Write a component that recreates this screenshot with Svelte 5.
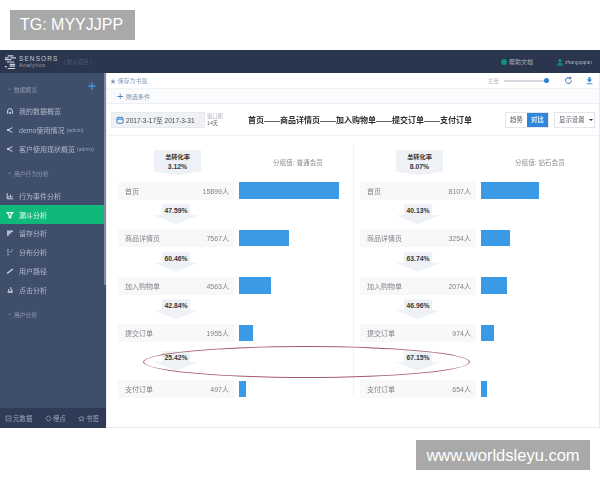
<script>
  const nav = [
    { type: "head", text: "数据概览", plus: true },
    { icon: "home", text: "我的数据概览" },
    { icon: "share", text: "demo使用情况", tag: "(admin)" },
    { icon: "share", text: "客户使用现状概览", tag: "(admin)" },
    { type: "head", text: "用户行为分析" },
    { icon: "chart", text: "行为事件分析" },
    { icon: "funnel", text: "漏斗分析", active: true },
    { icon: "retain", text: "留存分析" },
    { icon: "dist", text: "分布分析" },
    { icon: "path", text: "用户路径" },
    { icon: "click", text: "点击分析" },
    { type: "head", text: "用户分析" }
  ];

  const panels = [
    {
      total: "3.12%",
      group: "普通会员",
      steps: [
        { name: "首页", count: "15899人", bar: 100, next: "47.59%" },
        { name: "商品详情页", count: "7567人", bar: 50, next: "60.46%" },
        { name: "加入购物单", count: "4563人", bar: 32, next: "42.84%" },
        { name: "提交订单", count: "1955人", bar: 14, next: "25.42%" },
        { name: "支付订单", count: "497人", bar: 7 }
      ]
    },
    {
      total: "8.07%",
      group: "钻石会员",
      steps: [
        { name: "首页", count: "8107人", bar: 58, next: "40.13%" },
        { name: "商品详情页", count: "3254人", bar: 29, next: "63.74%" },
        { name: "加入购物单", count: "2074人", bar: 26, next: "46.96%" },
        { name: "提交订单", count: "974人", bar: 13, next: "67.15%" },
        { name: "支付订单", count: "654人", bar: 6 }
      ]
    }
  ];
</script>

{#snippet navIcon(name)}
  <svg class="nav-icon" viewBox="0 0 10 10" fill="none" stroke="currentColor" stroke-width="1.2">
    {#if name === "home"}
      <path d="M2 8.5V5a3 3 0 0 1 6 0v3.5M4.2 8.5V6.5h1.6v2" />
    {:else if name === "share"}
      <path d="M8 2 2.5 5 8 8" /><circle cx="2.5" cy="5" r=".8" fill="currentColor" />
    {:else if name === "chart"}
      <path d="M1.5 1.5v7h7.5M3.5 7V5M5.5 7V3.5M7.5 7V5" />
    {:else if name === "funnel"}
      <path d="M1.5 2h7L6 5.5V8.5H4V5.5Z" stroke-width="1.4" />
    {:else if name === "retain"}
      <path d="M2.5 2v6.5M5 2v4M7.5 2v2" stroke-width="2" />
    {:else if name === "dist"}
      <path d="M2.5 1.5v1.5M2.5 4.5v1.5M2.5 7.5v1.5M5.5 5h1.4M7 2.5h1.4" stroke-width="1.5" />
    {:else if name === "path"}
      <path d="M1.5 8 4.5 5.5 6 4.5 8.5 2.5" stroke-width="1.6" />
    {:else}
      <path d="M5 2.5h1.5M2.5 5h1.5M6 5h2M2 7.5h6.5" stroke-width="1.7" />
    {/if}
  </svg>
{/snippet}

<div class="page">
  <div class="tag">TG: MYYJJPP</div>

  <div class="frame">
    <header class="topbar">
      <svg class="logo" viewBox="0 0 14 16" fill="none" stroke="#cfd6e2" stroke-width="1.3">
        <path d="M4 1.5h6M1 3.5h4M7 3.5h6M1 5.5h7M3 8h8M6 10.5h6M1 13h2M6 12.5h6M4 15h8" />
      </svg>
      <div class="brand">
        <div class="brand-name">SENSORS</div>
        <div class="brand-sub">Analytics</div>
      </div>
      <div class="project">[ 默认项目 ]</div>
      <div class="top-right">
        <span class="top-link">
          <svg viewBox="0 0 10 10" fill="#14907a"><circle cx="5" cy="5" r="3.6" /></svg>
          帮助文档
        </span>
        <span class="top-link user">
          <svg viewBox="0 0 10 10" fill="#14907a"><circle cx="5" cy="3" r="2" /><path d="M1.5 9.5a3.5 3.5 0 0 1 7 0Z" /></svg>
          zhangqiqian
        </span>
      </div>
    </header>

    <div class="columns">
      <aside class="sidebar">
        <nav class="nav">
          {#each nav as item}
            {#if item.type === "head"}
              <div class="nav-head">
                <span class="chev">⌄</span>{item.text}
                {#if item.plus}<span class="nav-plus">+</span>{/if}
              </div>
            {:else}
              <div class="nav-item" class:active={item.active}>
                {@render navIcon(item.icon)}
                <span>{item.text}</span>
                {#if item.tag}<span class="nav-tag">{item.tag}</span>{/if}
              </div>
            {/if}
          {/each}
        </nav>
        <div class="side-foot">
          <span class="foot-link">
            <svg viewBox="0 0 10 10" fill="none" stroke="currentColor"><rect x="1.5" y="1.5" width="7" height="7" /><path d="M3.5 5h3" /></svg>
            元数据
          </span>
          <span class="foot-link">
            <svg viewBox="0 0 10 10" fill="none" stroke="currentColor" stroke-width="1.2"><path d="M5 1 9 5 5 9 1 5Z" /></svg>
            埋点
          </span>
          <span class="foot-link">
            <svg viewBox="0 0 10 10" fill="none" stroke="currentColor"><path d="M5 1.2 6.2 3.8 9 4.1 6.9 6 7.5 8.8 5 7.4 2.5 8.8 3.1 6 1 4.1 3.8 3.8Z" /></svg>
            书签
          </span>
        </div>
      </aside>

      <main class="content">
        <div class="toolbar">
          <span class="save">★ 保存为书签</span>
          <div class="tools">
            <span class="tools-label">主量</span>
            <div class="slider"><span class="knob"></span></div>
            <svg class="tool refresh" viewBox="0 0 10 10" fill="none" stroke="#3b6f9e" stroke-width="1.1">
              <path d="M8.3 5a3.3 3.3 0 1 1-1-2.4" /><path d="M7.6 .8v2.2H5.4" />
            </svg>
            <svg class="tool" viewBox="0 0 10 10" fill="#3f8fd6">
              <path d="M3.8 1h2.4v3h2L5 7.2 1.8 4h2ZM1.8 8h6.4v1.1H1.8Z" />
            </svg>
          </div>
        </div>
        <div class="filter"><span class="filter-plus">+</span> 筛选条件</div>

        <div class="heading">
          <div class="date">
            <svg viewBox="0 0 10 10" fill="none" stroke="#2f7fc9" stroke-width="1.2">
              <rect x="1.2" y="2" width="7.6" height="7" rx="1" /><path d="M1.2 4h7.6M3 .8V2M7 .8V2" />
            </svg>
            2017-3-17至 2017-3-31
          </div>
          <div class="window"><span>窗口期</span><span class="days">14天</span></div>
          <h1 class="title">首页——商品详情页——加入购物单——提交订单——支付订单</h1>
          <div class="switch">
            <span>趋势</span>
            <span class="on">对比</span>
          </div>
          <div class="display">显示设置<i class="caret"></i></div>
        </div>

        <div class="panels">
          {#each panels as panel}
            <section class="panel">
              <div class="panel-top">
                <div class="total">
                  <span>总转化率</span>
                  <b>{panel.total}</b>
                </div>
                <div class="group">分组值: {panel.group}</div>
              </div>
              {#each panel.steps as step, i}
                <div class="step">
                  <div class="step-info">
                    <span class="step-name">{step.name}</span>
                    <span class="step-count">{step.count}</span>
                  </div>
                  <div class="bar" style="width: {step.bar}px"></div>
                </div>
                {#if step.next}
                  <div class="link" class:last={i === 3}>
                    <div class="rate"><b>{step.next}</b></div>
                  </div>
                {/if}
              {/each}
            </section>
          {/each}
          <div class="ellipse"></div>
        </div>
      </main>
    </div>
  </div>

  <div class="site">www.worldsleyu.com</div>
</div>

<style>
  :global(body) {
    margin: 0;
    background: #fff;
  }
  .page {
    width: 600px;
    height: 480px;
    overflow: hidden;
    display: flex;
    flex-direction: column;
    font-family: "Liberation Sans", "Noto Sans CJK SC", sans-serif;
  }
  .tag {
    margin: 10px 0 10px 10px;
    width: 125px;
    height: 30px;
    box-sizing: border-box;
    padding-left: 10px;
    line-height: 30px;
    background: #a9a9a9;
    color: #fff;
    font-size: 16px;
  }
  .site {
    align-self: flex-end;
    margin: 12px 10px 0 0;
    width: 174px;
    height: 30px;
    line-height: 30px;
    text-align: center;
    background: #a9a9a9;
    color: #fff;
    font-size: 16.5px;
  }
  .frame {
    height: 378px;
    display: flex;
    flex-direction: column;
    filter: blur(0.35px);
  }
  .topbar {
    height: 23px;
    flex: none;
    display: flex;
    align-items: center;
    background: #2a354e;
    color: #c5ccd8;
  }
  .logo {
    width: 13px;
    height: 16px;
    margin-left: 4px;
  }
  .brand {
    margin-left: 2px;
    line-height: 7px;
  }
  .brand-name {
    font-size: 6.5px;
    letter-spacing: 1.1px;
  }
  .brand-sub {
    font-size: 5.5px;
    letter-spacing: 0.5px;
    color: #9aa4b6;
  }
  .project {
    margin-left: 5px;
    font-size: 5.5px;
    color: #4e5a72;
  }
  .top-right {
    margin-left: auto;
    display: flex;
    gap: 23px;
    margin-right: 8px;
    font-size: 6px;
    color: #a8b2c2;
  }
  .top-link {
    display: flex;
    align-items: center;
    gap: 1px;
  }
  .top-link svg {
    width: 8px;
    height: 8px;
  }
  .user {
    font-size: 5px;
  }
  .columns {
    flex: 1;
    display: flex;
    min-height: 0;
  }
  .sidebar {
    width: 106px;
    flex: none;
    display: flex;
    flex-direction: column;
    background: #3f4e6b;
    color: #aeb8c9;
    position: relative;
  }
  .sidebar::after {
    content: "";
    position: absolute;
    top: 0;
    right: 0;
    width: 2px;
    height: 212px;
    background: #7f8ba0;
  }
  .nav {
    flex: 1;
    padding-top: 7px;
  }
  .nav-head {
    height: 18px;
    display: flex;
    align-items: center;
    padding-left: 7px;
    margin: 0 0 4px;
    font-size: 5.8px;
    color: #8e9ab0;
    position: relative;
  }
  .nav-head:not(:first-child) {
    margin-top: 6px;
  }
  .chev {
    margin-right: 2px;
    margin-top: -3px;
  }
  .nav-plus {
    position: absolute;
    right: 10px;
    top: -2px;
    font-size: 14px;
    font-weight: bold;
    color: #3f8fd6;
  }
  .nav-item {
    height: 18.8px;
    display: flex;
    align-items: center;
    padding-left: 6px;
    font-size: 7px;
  }
  .nav-icon {
    width: 8px;
    height: 8px;
    margin-right: 5px;
    color: #d5dbe6;
    flex: none;
  }
  .nav-tag {
    margin-left: 2px;
    font-size: 5px;
    color: #98a3b6;
  }
  .nav-item.active {
    background: #10b97b;
    color: #e4f7ef;
    margin-right: 2px;
    width: 104px;
    box-sizing: border-box;
  }
  .active .nav-icon {
    color: #fff;
  }
  .side-foot {
    height: 20px;
    flex: none;
    display: flex;
    align-items: center;
    justify-content: space-between;
    padding: 0 7px 0 5px;
    background: #2f3b56;
    font-size: 6.5px;
    color: #9ba6b9;
  }
  .foot-link {
    display: flex;
    align-items: center;
    gap: 1px;
  }
  .foot-link svg {
    width: 7px;
    height: 7px;
  }
  .content {
    flex: 1;
    min-width: 0;
    display: flex;
    flex-direction: column;
    border-left: 1px solid #eef0f3;
    border-right: 1px solid #e8eaee;
    border-bottom: 1px solid #e6e8ec;
  }
  .toolbar {
    height: 15px;
    flex: none;
    display: flex;
    align-items: center;
    padding-left: 3px;
    font-size: 6px;
    color: #7d99b8;
  }
  .tools {
    margin-left: auto;
    display: flex;
    align-items: center;
    color: #b9bec6;
    font-size: 5.5px;
  }
  .slider {
    width: 44px;
    height: 2px;
    margin: 0 16px 0 5px;
    background: #d5d9df;
    position: relative;
  }
  .knob {
    position: absolute;
    right: -1px;
    top: -2px;
    width: 5px;
    height: 5px;
    border-radius: 50%;
    background: #2f7fc9;
  }
  .tool {
    width: 9px;
    height: 9px;
    margin-right: 5px;
  }
  .refresh {
    margin-right: 12px;
  }
  .filter {
    height: 16px;
    flex: none;
    display: flex;
    align-items: center;
    padding-left: 10px;
    gap: 2px;
    background: #fafbfc;
    border-top: 1px solid #f1f2f4;
    border-bottom: 1px solid #eceef1;
    box-sizing: border-box;
    font-size: 6.2px;
    color: #7d99b8;
  }
  .filter-plus {
    font-size: 11px;
    line-height: 11px;
    color: #5f7f9f;
  }
  .heading {
    height: 32px;
    flex: none;
    display: flex;
    align-items: center;
    padding-left: 4px;
    border-bottom: 1px solid #f0f1f3;
    box-sizing: border-box;
  }
  .date {
    width: 94px;
    height: 16px;
    box-sizing: border-box;
    display: flex;
    align-items: center;
    gap: 2px;
    padding-left: 4px;
    background: #f0f1f3;
    border: 1px solid #e8e9ec;
    font-size: 6.6px;
    color: #444c58;
    white-space: nowrap;
  }
  .date svg {
    width: 8px;
    height: 8px;
  }
  .window {
    width: 41px;
    margin-left: 2px;
    display: flex;
    flex-direction: column;
    font-size: 5.2px;
    line-height: 7px;
    color: #a4a8af;
  }
  .days {
    color: #5e646e;
  }
  .title {
    width: 226px;
    margin: 0;
    font-size: 8px;
    font-weight: bold;
    white-space: nowrap;
    color: #2a2d33;
  }
  .switch {
    margin-left: 31px;
    display: flex;
    height: 16px;
    border: 1px solid #e3e5e9;
    box-sizing: border-box;
    font-size: 6.4px;
    color: #565c66;
  }
  .switch span {
    width: 21px;
    line-height: 14px;
    text-align: center;
  }
  .switch .on {
    background: #2f86da;
    color: #e8f2fb;
    font-weight: bold;
  }
  .display {
    margin-left: 5px;
    width: 41px;
    height: 16px;
    box-sizing: border-box;
    padding-left: 4px;
    border: 1px solid #e3e5e9;
    font-size: 6.4px;
    line-height: 14px;
    color: #565c66;
    white-space: nowrap;
  }
  .caret {
    display: inline-block;
    margin-left: 4px;
    vertical-align: middle;
    border: 2px solid transparent;
    border-top-color: #333;
    border-bottom: 0;
  }
  .panels {
    flex: 1;
    display: flex;
    position: relative;
    padding-left: 11px;
    font-size: 7px;
  }
  .panel {
    width: 235px;
    padding-top: 14px;
    color: #80848b;
  }
  .panel + .panel {
    padding-left: 6px;
    border-left: 1px solid #f0f1f3;
    width: 230px;
    height: 247px;
    margin-top: 8px;
    padding-top: 6px;
  }
  .panel-top {
    height: 31.5px;
    display: flex;
  }
  .total {
    margin-left: 36px;
    width: 47px;
    height: 25px;
    box-sizing: border-box;
    padding-top: 2px;
    display: flex;
    flex-direction: column;
    align-items: center;
    font-size: 6.2px;
    line-height: 10px;
    color: #33373d;
    background: #eef1f5;
    clip-path: polygon(0 0, 100% 0, 100% 86%, 50% 100%, 0 86%);
    font-weight: bold;
  }
  .total b {
    font-size: 6.8px;
  }
  .group {
    margin-left: 72px;
    margin-top: 7px;
    font-size: 6.6px;
    color: #8c9096;
  }
  .step {
    display: flex;
    align-items: center;
    gap: 5px;
    height: 18px;
  }
  .step-info {
    width: 116px;
    height: 18px;
    flex: none;
    box-sizing: border-box;
    padding: 0 5px 0 7px;
    display: flex;
    justify-content: space-between;
    align-items: center;
    background: #f8f8f9;
  }
  .bar {
    height: 16.5px;
    background: #3a9ae6;
  }
  .link {
    height: 29.5px;
    display: flex;
    align-items: center;
  }
  .link.last {
    height: 38px;
  }
  .rate {
    margin-left: 36px;
    width: 44px;
    height: 20px;
    padding-top: 2px;
    box-sizing: border-box;
    text-align: center;
    font-size: 6.8px;
    line-height: 9px;
    color: #33373d;
    background: #eef1f5;
    clip-path: polygon(18% 0, 82% 0, 82% 55%, 100% 55%, 50% 100%, 0 55%, 18% 55%);
  }
  .ellipse {
    position: absolute;
    left: 36px;
    top: 210px;
    width: 327px;
    height: 32px;
    box-sizing: border-box;
    border: 1px solid #a65a68;
    border-radius: 50%;
  }
</style>
